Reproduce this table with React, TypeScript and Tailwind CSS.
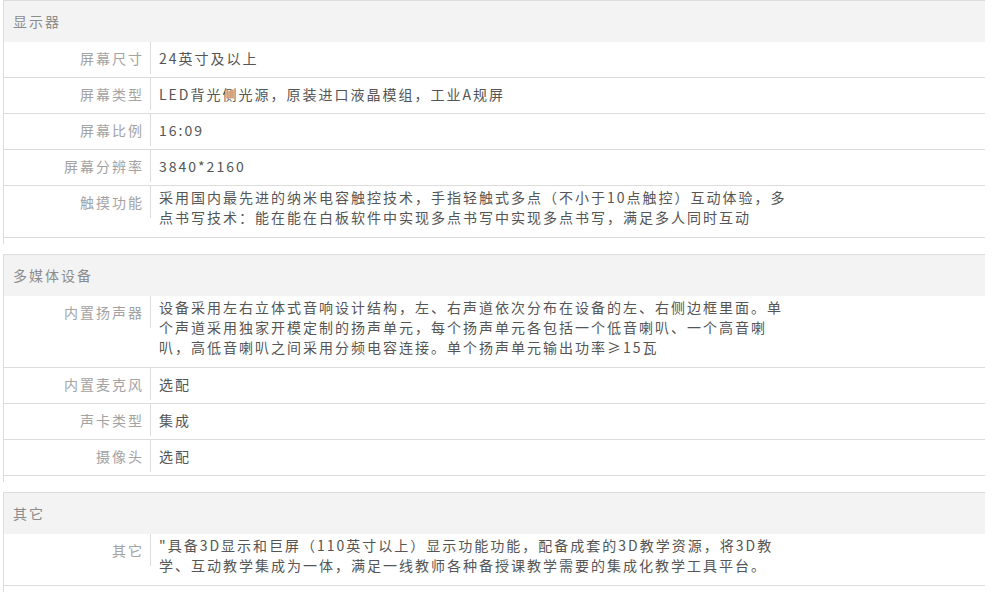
import React from "react";

type Row = { label: string; lines: string[] };
type Section = { title: string; rows: Row[] };

const sections: Section[] = [
  {
    title: "显示器",
    rows: [
      { label: "屏幕尺寸", lines: ["24英寸及以上"] },
      { label: "屏幕类型", lines: ["LED背光侧光源，原装进口液晶模组，工业A规屏"] },
      { label: "屏幕比例", lines: ["16:09"] },
      { label: "屏幕分辨率", lines: ["3840*2160"] },
      {
        label: "触摸功能",
        lines: [
          "采用国内最先进的纳米电容触控技术，手指轻触式多点（不小于10点触控）互动体验，多",
          "点书写技术：能在能在白板软件中实现多点书写中实现多点书写，满足多人同时互动",
        ],
      },
    ],
  },
  {
    title: "多媒体设备",
    rows: [
      {
        label: "内置扬声器",
        lines: [
          "设备采用左右立体式音响设计结构，左、右声道依次分布在设备的左、右侧边框里面。单",
          "个声道采用独家开模定制的扬声单元，每个扬声单元各包括一个低音喇叭、一个高音喇",
          "叭，高低音喇叭之间采用分频电容连接。单个扬声单元输出功率≥15瓦",
        ],
      },
      { label: "内置麦克风", lines: ["选配"] },
      { label: "声卡类型", lines: ["集成"] },
      { label: "摄像头", lines: ["选配"] },
    ],
  },
  {
    title: "其它",
    rows: [
      {
        label: "其它",
        lines: [
          "\"具备3D显示和巨屏（110英寸以上）显示功能功能，配备成套的3D教学资源，将3D教",
          "学、互动教学集成为一体，满足一线教师各种备授课教学需要的集成化教学工具平台。",
        ],
      },
    ],
  },
];

const SpecRow = ({ row }: { row: Row }) => {
  const multi = row.lines.length > 1;
  return (
    <div className="flex min-h-[36px] border-b border-[#dcdcdc]">
      <div className="w-[147px] h-[32px] shrink-0 border-r border-[#dcdcdc] pr-[6px] text-right leading-[32px] text-[#a3a3a3]">
        {row.label}
      </div>
      <div className={`pl-[8px] leading-[20px] text-[#555] ${multi ? "pt-[1px] pb-[10px]" : "pt-[6px]"}`}>
        {row.lines.map((line) => (
          <span key={line} className="block whitespace-nowrap">
            {line}
          </span>
        ))}
      </div>
    </div>
  );
};

export default function App() {
  return (
    <div
      className="w-[995px] h-[595px] overflow-hidden bg-white text-[14px] tracking-[2px]"
      style={{ fontFamily: '"Noto Sans CJK SC", "Noto Sans", sans-serif' }}
    >
      <div className="ml-[3px] w-[982px]">
        {sections.map((section) => (
          <div key={section.title} className="mb-[10px] border-l border-[#dcdcdc] pb-[6px]">
            <div className="border-t border-[#dcdcdc] bg-[#f3f3f3] h-[42px] pl-[9px] leading-[41px] text-[#8c8c8c]">
              {section.title}
            </div>
            {section.rows.map((row) => (
              <SpecRow key={row.label} row={row} />
            ))}
          </div>
        ))}
      </div>
    </div>
  );
}
